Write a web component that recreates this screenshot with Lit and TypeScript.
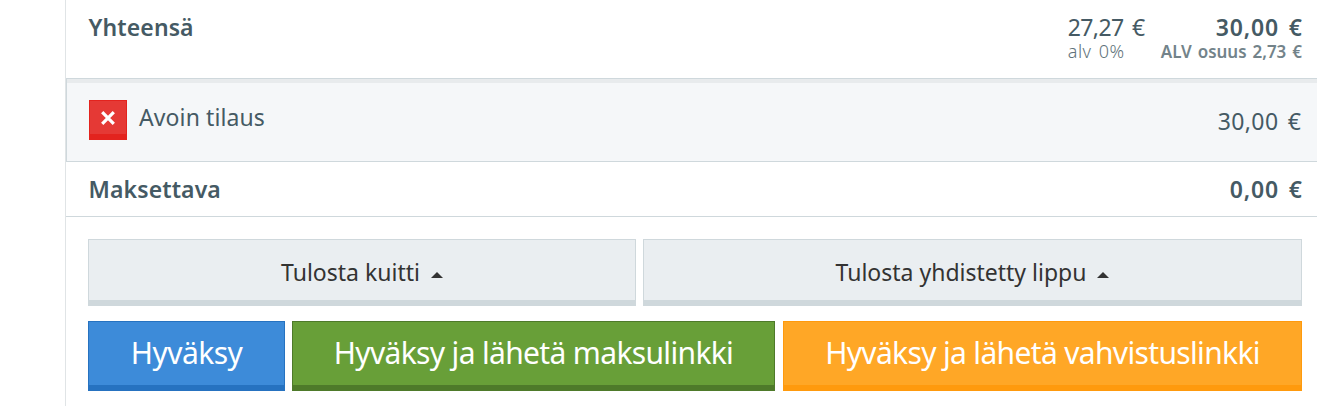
import { LitElement, html, css } from "lit";
import { customElement } from "lit/decorators.js";

@customElement("app-root")
export class AppRoot extends LitElement {
  static styles = css`
    :host { display: block; height: 406px; overflow: hidden; background: #fff; color: #455a64;
      font-family: "Noto Sans", "Open Sans", sans-serif; font-size: 23px; line-height: 30px; }
    * { box-sizing: border-box; }
    .panel { margin-left: 65px; height: 406px; border-left: 1px solid #e0e4e6; white-space: nowrap; }
    .row { display: flex; justify-content: space-between; padding: 0 15px 0 22.6px; }
    .strong { font-weight: 600; }
    .label { letter-spacing: 0.1px; }
    .total { height: 78px; padding-top: 12px; }
    .sums { display: flex; gap: 16px; }
    .net { width: 77px; }
    .net .price { letter-spacing: -0.6px; word-spacing: 3px; }
    .vat { text-align: right; }
    .strong .price, .strong.price { letter-spacing: 0.8px; word-spacing: 3.2px; margin-right: -0.8px; }
    .small { font-size: 17px; line-height: 20px; opacity: .75; }
    .net .small { font-size: 18px; line-height: 18px; font-weight: 300; opacity: .85; letter-spacing: 0.5px; word-spacing: 2px; }
    .vat .small { word-spacing: 1.6px; letter-spacing: -0.03px; }
    .open { height: 84px; border: 1px solid #cfd8dc; border-right: 0; padding-left: 22px;
      padding-right: 16px; background: #f5f7f9; box-shadow: inset 0 4px 0 #e8ebed; }
    .order { display: flex; padding-top: 21px; gap: 12px; }
    .order span { margin-top: 2px; letter-spacing: 0.1px; }
    .remove { width: 38px; height: 40px; padding: 0; display: grid; place-items: center;
      background: #e53935; border: 1px solid #e3231e; border-bottom-width: 6px; }
    .amount { padding-top: 27px; letter-spacing: 0.4px; word-spacing: 3px; margin-right: -0.4px; }
    .due { height: 55px; padding-top: 12px; border-bottom: 1px solid #cfd8dc; }
    .buttons { display: grid; padding: 0 15px 0 22px; }
    .print { margin-top: 22px; grid-template-columns: 548px 659px; gap: 7px; }
    .actions { margin-top: 15px; grid-template-columns: 197px 483px 519px; column-gap: 7px; }
    button { font: inherit; margin: 0; padding: 0; border: 1px solid; border-bottom-width: 6px; }
    .print button { height: 67px; display: flex; align-items: center; justify-content: center; gap: 11px;
      padding-top: 4px; color: #333; background: #eaeef1; border-color: #cfd8dc; }
    .caret { border: 6px solid transparent; border-top: 0; border-bottom-color: #333; margin-top: 6px; }
    .actions button { height: 70px; padding-bottom: 2px; font-size: 30px; letter-spacing: -0.66px; color: #fff; }
    .actions .blue { background: #3d8bd9; border-color: #2672c0; letter-spacing: -0.55px; }
    .green { background: #689f38; border-color: #4e7a2a; }
    .orange { background: #ffa726; border-color: #ff9a0d; margin-left: 1px; margin-right: -1px; }
  `;

  render() {
    return html`<div class="panel">
      <div class="row total">
        <span class="strong label">Yhteensä</span>
        <div class="sums">
          <div class="net"><div class="price">27,27 €</div><div class="small">alv 0%</div></div>
          <div class="strong vat"><div class="price">30,00 €</div><div class="small">ALV osuus 2,73 €</div></div>
        </div>
      </div>
      <div class="row open">
        <div class="order">
          <button class="remove" aria-label="Poista"><svg width="16" height="16" viewBox="0 0 16 16"><path d="M2.2 2.2 13.8 13.8M13.8 2.2 2.2 13.8" stroke="#fff" stroke-width="3.2"/></svg></button>
          <span>Avoin tilaus</span>
        </div>
        <span class="amount">30,00 €</span>
      </div>
      <div class="row due"><span class="strong label">Maksettava</span><span class="strong price">0,00 €</span></div>
      <div class="buttons print">
        <button><span>Tulosta kuitti</span><i class="caret"></i></button>
        <button><span>Tulosta yhdistetty lippu</span><i class="caret"></i></button>
      </div>
      <div class="buttons actions">
        <button class="blue">Hyväksy</button>
        <button class="green">Hyväksy ja lähetä maksulinkki</button>
        <button class="orange">Hyväksy ja lähetä vahvistuslinkki</button>
      </div>
    </div>`;
  }
}
